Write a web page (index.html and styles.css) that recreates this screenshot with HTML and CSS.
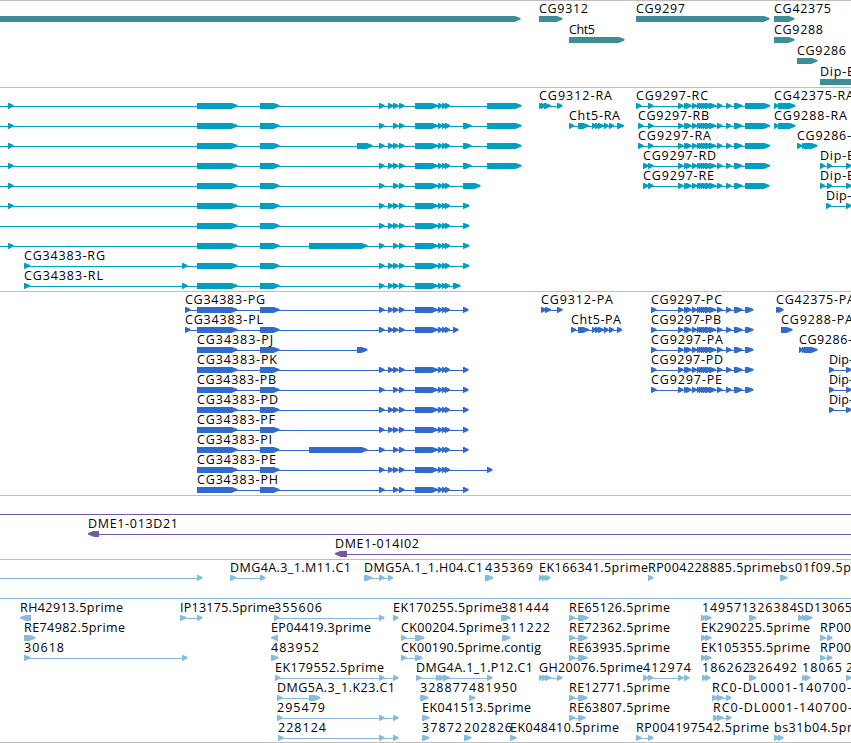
FILE: index.html
```html
<!DOCTYPE html>
<html lang="en">
<head>
    <meta charset="UTF-8">
    <meta name="viewport" content="width=device-width, initial-scale=1.0">
    <title>Genome Browser</title>
    <link rel="stylesheet" href="styles.css">
</head>
<body>
    <main id="browser">
        <section class="track genes"><svg id="genes"></svg></section>
        <section class="track transcripts"><svg id="transcripts"></svg></section>
        <section class="track cds"><svg id="cds"></svg></section>
        <section class="track bacs"><svg id="bacs"></svg></section>
        <section class="track ests"><svg id="ests"></svg></section>
    </main>
    <script src="tracks.js"></script>
</body>
</html>
```

FILE: styles.css
```css
body {
    margin: 0;
    background: #fff;
    overflow: hidden;
}
#browser {
    width: 851px;
}
.track {
    box-sizing: border-box;
    border-top: 1px solid #bebebe;
    overflow: hidden;
}
.track svg {
    display: block;
    width: 100%;
    height: 100%;
}
.track text {
    font-family: "Open Sans", "DejaVu Sans", sans-serif;
    font-size: 12.5px;
    fill: #000;
}
.genes {
    height: 87px;
    color: #3d8d94;
}
.transcripts {
    height: 204px;
    color: #009ec0;
}
.cds {
    height: 204px;
    color: #306bcc;
}
.bacs {
    height: 64px;
    color: #7557a8;
}
.ests {
    height: 184px;
    color: #87bbdd;
    border-bottom: 1px solid #bebebe;
}
.part,
.line {
    fill: currentColor;
}
.line {
    shape-rendering: crispEdges;
}
```

FILE: tracks.js
```js
const SVG = "http://www.w3.org/2000/svg";
const WIDTH = 851;

// Shared exons
const left = [[197, 237.5], [260, 279.5]];
const four = [[379, 384.5], [388, 393.5], [393, 398.5], [399, 404.5]];
const three = [[379, 384.5], [393, 398.5], [399, 404.5]];
const mid = [[415, 438], [438, 442.5], [442, 446.5], [445, 450]];
const cg9297 = [[678, 683.5], [684, 689], [686, 691.5], [692, 697], [697, 700.5], [699, 703], [701, 705.5], [703, 707],
    [705, 712.5], [709, 716], [717, 722.5], [726, 731.5], [734, 742.5]];
const cht5 = [[569, 574], [578, 589], [592, 596], [595, 600.5], [598, 604], [604, 608.5], [609, 614]];

// Feature: [row, label, x, label width, parts, line start, line end]
const genes = [
    [0, "", 0, 0, [[-10, 520.5]]],
    [0, "CG9312", 539, 49, [[539, 562.5]]],
    [0, "CG9297", 636, 49, [[636, 769.5]]],
    [0, "CG42375", 774, 57, [[774, 794.5]]],
    [1, "Cht5", 569, 26, [[569, 624.5]]],
    [1, "CG9288", 774, 49, [[774, 794.5]]],
    [2, "CG9286", 797, 49, [[797, 817.5]]],
    [3, "Dip-B", 820, 35, [[820, 870]]]
];

const transcripts = [
    [0, "", 0, 0, [[8, 13.5], ...left, ...four, ...mid, [487, 521.5]], 0],
    [1, "", 0, 0, [[8, 13.5], ...left, ...three, ...mid, [463, 471.5], [487, 521.5]], 0],
    [2, "", 0, 0, [[8, 13.5], ...left, [357, 372.5], ...four, ...mid, [463, 471.5], [487, 521.5]], 0],
    [3, "", 0, 0, [[8, 13.5], ...left, ...four, ...mid, [463, 471.5], [487, 521.5]], 0],
    [4, "", 0, 0, [[8, 13.5], ...left, ...three, ...mid, [463, 480.5]], 0],
    [5, "", 0, 0, [[8, 13.5], ...left, ...four, ...mid, [463, 469.5]], 0],
    [6, "", 0, 0, [...left, ...four, ...mid, [463, 469.5]], 0],
    [7, "", 0, 0, [[8, 13.5], ...left, [309, 367.5], ...three, ...mid, [463, 469.5]], 0],
    [8, "CG34383-RG", 24, 81, [[24, 30], [182, 187.5], ...left, ...four, ...mid, [463, 469.5]]],
    [9, "CG34383-RL", 24, 79, [[24, 30], [182, 187.5], ...left, ...four, ...mid, [453, 460.5]]],
    [0, "CG9312-RA", 539, 73, [[539, 543], [541, 546], [544, 551], [557, 562.5]]],
    [1, "Cht5-RA", 569, 51, [...cht5, [617, 624]]],
    [0, "CG9297-RC", 636, 72, [[636, 641.5], [648, 653.5], ...cg9297, [745, 770]]],
    [1, "CG9297-RB", 638, 71, [[638, 643.5], [648, 653.5], ...cg9297, [745, 770]]],
    [2, "CG9297-RA", 638, 73, [[638, 643.5], [648, 653.5], ...cg9297, [745, 770]]],
    [3, "CG9297-RD", 643, 73, [[643, 648.5], [648, 653.5], ...cg9297, [745, 770]]],
    [4, "CG9297-RE", 643, 71, [[643, 648.5], [648, 653.5], ...cg9297, [745, 769.5]]],
    [0, "CG42375-RA", 774, 80, [[774, 778.5], [778, 795.5]]],
    [1, "CG9288-RA", 774, 73, [[774, 778.5], [778, 795.5]]],
    [2, "CG9286-", 797, 54, [[797, 802], [802, 806], [804, 817.5]]],
    [3, "Dip-B", 820, 35, [[820, 825], [827, 832], [846, 851.5]]],
    [4, "Dip-B", 820, 35, [[820, 825], [827, 832], [846, 851.5]]],
    [5, "Dip-", 826, 25, [[826, 831], [846, 851.5]]]
];

const cds = [
    [0, "CG34383-PG", 185, 80, [[185, 190.5], ...left, ...four, ...mid, [463, 468.5]]],
    [1, "CG34383-PL", 185, 78, [[185, 190.5], ...left, ...four, ...mid, [453, 458.5]]],
    [2, "CG34383-PJ", 197, 76, [...left, [357, 367.5]]],
    [3, "CG34383-PK", 197, 80, [...left, ...four, ...mid, [463, 468.5]]],
    [4, "CG34383-PB", 197, 79, [...left, ...three, ...mid, [463, 468.5]]],
    [5, "CG34383-PD", 197, 81, [...left, ...four, ...mid, [463, 468.5]]],
    [6, "CG34383-PF", 197, 78, [...left, ...four, ...mid, [463, 468.5]]],
    [7, "CG34383-PI", 197, 75, [...left, [309, 367.5], ...three, ...mid, [463, 468.5]]],
    [8, "CG34383-PE", 197, 79, [...left, ...four, ...mid, [487, 492.5]]],
    [9, "CG34383-PH", 197, 81, [...left, ...three, ...mid, [463, 468.5]]],
    [0, "CG9312-PA", 541, 72, [[541, 546], [545, 551], [557, 562.5]]],
    [1, "Cht5-PA", 571, 50, [[571, 576], ...cht5.slice(1), [617, 622]]],
    [0, "CG9297-PC", 651, 71, [[651, 656.5], ...cg9297, [745, 753.5]]],
    [1, "CG9297-PB", 651, 70, [[651, 656.5], ...cg9297, [745, 753.5]]],
    [2, "CG9297-PA", 651, 72, [[651, 656.5], ...cg9297, [745, 753.5]]],
    [3, "CG9297-PD", 651, 72, [[651, 656.5], ...cg9297, [745, 753.5]]],
    [4, "CG9297-PE", 651, 71, [[651, 656.5], ...cg9297, [745, 753.5]]],
    [0, "CG42375-PA", 776, 79, [[776, 780], [778, 783.5]]],
    [1, "CG9288-PA", 781, 72, [[781, 792.5]]],
    [2, "CG9286-", 799, 53, [[799, 803], [802, 806], [804, 817.5]]],
    [3, "Dip-", 829, 24, [[829, 834], [846, 851.5]]],
    [4, "Dip-", 829, 24, [[829, 834], [846, 851.5]]],
    [5, "Dip-", 829, 24, [[829, 834], [846, 851.5]]]
];

// Parts given as [end, start] point to the left
const bacs = [
    [0, "", 0, 0, [], 0, WIDTH],
    [1, "DME1-013D21", 88, 90, [[99, 88]], 90, WIDTH],
    [2, "DME1-014I02", 335, 84, [[347, 335]], 337, WIDTH]
];

const ests = [
    [0, "", 0, 0, [[197, 202.5]], 0],
    [0, "DMG4A.3_1.M11.C1", 230, 121, [[230, 236.5], [260, 265.5]]],
    [0, "DMG5A.1_1.H04.C1", 364, 119, [[364, 372.5], [379, 384.5], [388, 393]]],
    [0, "435369", 485, 48, [[485, 493.5]]],
    [0, "EK166341.5prime", 539, 109, [[539, 543], [542, 547], [545, 550.5]]],
    [0, "RP004228885.5prime", 648, 132, [[648, 653.5]]],
    [0, "bs01f09.5p", 780, 71, [[780, 787.5]]],
    [1, "", 0, 0, [], 0, WIDTH],
    [2, "RH42913.5prime", 20, 103, [[31, 20]]],
    [2, "IP13175.5prime", 180, 95, [[180, 186.5], [197, 202.5]]],
    [2, "355606", 274, 48, [[274, 279.5], [379, 384.5]]],
    [2, "EK170255.5prime", 393, 109, [[393, 398.5]]],
    [2, "381444", 501, 48, [[501, 510.5]]],
    [2, "RE65126.5prime", 569, 101, [[569, 575], [578, 588.5]]],
    [2, "149571", 702, 47, [[701, 706.5], [705, 711.5]]],
    [2, "326384", 749, 48, [[749, 756.5]]],
    [2, "SD13065", 797, 55, [[798, 803], [802, 807], [805, 812.5]]],
    [3, "RE74982.5prime", 24, 101, [[24, 35.5]]],
    [3, "EP04419.3prime", 271, 100, [[278, 271]]],
    [3, "CK00204.5prime", 401, 101, [[401, 406.5], [415, 424.5]]],
    [3, "311222", 502, 48, [[502, 510.5]]],
    [3, "RE72362.5prime", 569, 101, [[569, 575], [578, 587.5]]],
    [3, "EK290225.5prime", 701, 109, [[701, 706.5], [705, 711.5]]],
    [3, "RP00", 820, 31, [[820, 825.5], [827, 832.5]]],
    [4, "30618", 24, 40, [[24, 30.5], [182, 187.5]]],
    [4, "483952", 271, 48, [[271, 278.5]]],
    [4, "CK00190.5prime.contig", 401, 140, [[401, 406.5], [415, 422.5]]],
    [4, "RE63935.5prime", 569, 101, [[569, 575], [578, 587.5]]],
    [4, "EK105355.5prime", 701, 109, [[701, 706.5], [705, 711.5]]],
    [4, "RP00", 820, 31, [[820, 825.5], [827, 832.5]]],
    [5, "EK179552.5prime", 275, 109, [[275, 280.5], [379, 384.5], [393, 398.5]]],
    [5, "DMG4A.1_1.P12.C1", 416, 117, [[416, 421.5], [436, 441], [439, 445], [443, 450], [487, 492.5]]],
    [5, "GH20076.5prime", 539, 104, [[539, 543], [542, 547], [545, 551.5], [557, 562.5]]],
    [5, "412974", 643, 48, [[643, 648.5], [648, 653.5], [678, 683.5], [684, 689.5]]],
    [5, "186262", 702, 48, [[702, 706.5], [705, 710.5]]],
    [5, "326492", 749, 48, [[749, 756.5]]],
    [5, "18065", 802, 40, [[802, 806.5], [805, 810.5]]],
    [5, "2", 846, 8, [[846, 851.5]]],
    [6, "DMG5A.3_1.K23.C1", 277, 118, [[277, 282.5], [309, 320.5]]],
    [6, "328877", 420, 48, [[420, 428.5]]],
    [6, "481950", 469, 48, [[469, 475.5]]],
    [6, "RE12771.5prime", 569, 101, [[569, 575], [578, 587.5]]],
    [6, "RC0-DL0001-140700-", 712, 139, [[712, 718], [717, 723.5], [726, 731.5]]],
    [7, "295479", 277, 48, [[277, 282.5], [379, 384.5], [393, 398.5]]],
    [7, "EK041513.5prime", 422, 109, [[422, 429.5]]],
    [7, "RE63807.5prime", 569, 101, [[569, 575], [578, 585.5]]],
    [7, "RC0-DL0001-140700-", 713, 139, [[713, 718], [717, 723.5], [726, 731.5]]],
    [8, "228124", 278, 48, [[278, 283.5], [379, 384.5], [393, 398.5]]],
    [8, "37872", 422, 40, [[422, 429.5]]],
    [8, "202826", 464, 48, [[464, 471.5]]],
    [8, "EK048410.5prime", 510, 109, [[510, 516.5]]],
    [8, "RP004197542.5prime", 636, 133, [[636, 641.5], [648, 653.5]]],
    [8, "bs31b04.5pr", 774, 78, [[774, 779.5], [778, 783.5]]]
];

function add(parent, name, attrs) {
    const el = document.createElementNS(SVG, name);
    for (const key in attrs) el.setAttribute(key, attrs[key]);
    parent.appendChild(el);
    return el;
}

function drawPart(svg, a, b, y) {
    // head is 6px long, short parts are all head
    const dir = b > a ? 1 : -1;
    const head = Math.min(6, Math.abs(b - a) - 0.5) * dir;
    const d = `M${a} ${y}H${b - head + dir * 0.5}L${b} ${y + 2}V${y + 3.4}L${b - head} ${y + 6}H${a}Z`;
    add(svg, "path", { class: "part", d: d });
}

function drawTrack(id, features, pitch) {
    const svg = document.getElementById(id);
    features.forEach(([row, label, x, width, parts, from, to]) => {
        const y = 15 + row * pitch;
        const start = from ?? parts[0][0];
        const end = to ?? parts[parts.length - 1][1] - 3;
        if (parts.length !== 1 || from !== undefined) {
            add(svg, "rect", { class: "line", x: start, y: y + 3, width: end - start, height: 1 });
        }
        parts.forEach(([a, b]) => drawPart(svg, a, b, y));
        if (label) {
            const text = add(svg, "text", { x: x, y: y - 3, textLength: width });
            text.textContent = label;
        }
    });
}

drawTrack("genes", genes, 21);
drawTrack("transcripts", transcripts, 20);
drawTrack("cds", cds, 20);
drawTrack("bacs", bacs, 20);
drawTrack("ests", ests, 20);
```
